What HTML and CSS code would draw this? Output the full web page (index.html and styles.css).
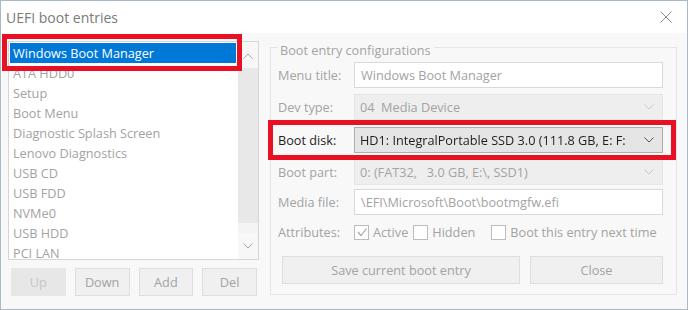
FILE: index.html
```html
<!DOCTYPE html>
<html lang="en">
<head>
  <meta charset="UTF-8" />
  <title>UEFI boot entries</title>
  <link rel="stylesheet" href="styles.css">
</head>
<body>
  <div class="window">
    <div class="titlebar">
      <span class="title">UEFI boot entries</span>
      <svg class="close-x" width="12" height="12" viewBox="0 0 12 12">
        <path d="M0.5 0.5 L11.5 11.5 M11.5 0.5 L0.5 11.5" stroke="#8c8c8c" stroke-width="1" fill="none"/>
      </svg>
    </div>

    <div class="client">
      <div class="left">
        <div class="listbox">
          <div class="list-clip">
            <ul class="items">
              <li class="selected">Windows Boot Manager</li>
              <li>ATA HDD0</li>
              <li>Setup</li>
              <li>Boot Menu</li>
              <li>Diagnostic Splash Screen</li>
              <li>Lenovo Diagnostics</li>
              <li>USB CD</li>
              <li>USB FDD</li>
              <li>NVMe0</li>
              <li>USB HDD</li>
              <li>PCI LAN</li>
            </ul>
            <div class="scrollbar">
              <div class="sb-arrow">
                <svg width="10" height="6" viewBox="0 0 10 6"><path d="M0.5 5.5 L5 1 L9.5 5.5" stroke="#a6a6a6" fill="none"/></svg>
              </div>
              <div class="sb-thumb"></div>
              <div class="sb-track"></div>
              <div class="sb-arrow">
                <svg width="10" height="6" viewBox="0 0 10 6"><path d="M0.5 0.5 L5 5 L9.5 0.5" stroke="#a6a6a6" fill="none"/></svg>
              </div>
            </div>
          </div>
          <div class="mark mark-list"></div>
        </div>
        <div class="list-buttons">
          <button class="btn btn-off">Up</button>
          <button class="btn">Down</button>
          <button class="btn">Add</button>
          <button class="btn">Del</button>
        </div>
      </div>

      <fieldset class="group">
        <legend>Boot entry configurations</legend>

        <div class="row row-title">
          <span class="label">Menu title:</span>
          <div class="field field-input">Windows Boot Manager</div>
        </div>

        <div class="row row-dev">
          <span class="label">Dev type:</span>
          <div class="field field-select">
            <span class="value">04&nbsp; Media Device</span>
            <svg class="chev" width="10" height="6" viewBox="0 0 10 6"><path d="M0.5 0.5 L5 5 L9.5 0.5" stroke="#c8c8c8" fill="none"/></svg>
          </div>
        </div>

        <div class="row row-disk">
          <span class="label label-on">Boot disk:</span>
          <div class="field field-select field-on">
            <span class="value">HD1: IntegralPortable SSD 3.0 (111.8 GB, E: F:</span>
            <svg class="chev" width="10" height="6" viewBox="0 0 10 6"><path d="M0.5 0.5 L5 5 L9.5 0.5" stroke="#555" fill="none"/></svg>
          </div>
          <div class="mark mark-disk"></div>
        </div>

        <div class="row row-part">
          <span class="label">Boot part:</span>
          <div class="field field-select">
            <span class="value">0: (FAT32,&nbsp;&nbsp; 3.0 GB, E:\, SSD1)</span>
            <svg class="chev" width="10" height="6" viewBox="0 0 10 6"><path d="M0.5 0.5 L5 5 L9.5 0.5" stroke="#c8c8c8" fill="none"/></svg>
          </div>
        </div>

        <div class="row row-media">
          <span class="label">Media file:</span>
          <div class="field field-input">\EFI\Microsoft\Boot\bootmgfw.efi</div>
        </div>

        <div class="row row-attrs">
          <span class="label">Attributes:</span>
          <div class="checks">
            <label class="check">
              <span class="box">
                <svg width="12" height="12" viewBox="0 0 12 12"><path d="M2 6 L5 9.5 L10.5 2.5" stroke="#a8a8a8" stroke-width="1.2" fill="none"/></svg>
              </span>Active
            </label>
            <label class="check"><span class="box"></span>Hidden</label>
            <label class="check check-far"><span class="box"></span>Boot this entry next time</label>
          </div>
        </div>

        <div class="actions">
          <button class="btn btn-save">Save current boot entry</button>
          <button class="btn btn-close">Close</button>
        </div>
      </fieldset>
    </div>
  </div>
</body>
</html>
```

FILE: styles.css
```css
:root {
  --client-bg: #f8f8f8;
  --dim-text: #a3a3a3;
  --dark-text: #1e1e1e;
  --mark: #e81123;
  --select-blue: #0078d7;
}

* {
  box-sizing: border-box;
}

body {
  margin: 0;
  font-family: 'Open Sans', 'Noto Sans', sans-serif;
  font-size: 12.7px;
  color: var(--dim-text);
}

.window {
  width: 688px;
  height: 310px;
  border: 1px solid #a9b9c6;
  background-color: var(--client-bg);
  display: flex;
  flex-direction: column;
}

.titlebar {
  height: 32px;
  background-color: #ffffff;
  display: flex;
  align-items: center;
  justify-content: space-between;
  padding: 0 15px 0 5px;
}

.title {
  font-size: 14px;
  color: #7a7a7a;
}

.client {
  flex: 1;
  display: flex;
  gap: 11px;
  padding: 8px 10px 0 7px;
}

/* left side: entry list */
.left {
  flex: none;
  width: 251px;
  display: flex;
  flex-direction: column;
}

.listbox {
  position: relative;
  height: 219px;
  border: 1px solid #d6d6d6;
  background-color: #ffffff;
}

.list-clip {
  height: 100%;
  display: flex;
  overflow: hidden;
}

.items {
  list-style: none;
  margin: 0;
  padding: 1px 0 0 1px;
  flex: 1;
}

.items li {
  height: 20px;
  line-height: 20px;
  padding-left: 3px;
  white-space: nowrap;
}

.items li.selected {
  background-color: var(--select-blue);
  color: #ffffff;
  margin-right: 2px;
}

.scrollbar {
  width: 20px;
  display: flex;
  flex-direction: column;
  background-color: #f4f4f4;
}

.sb-arrow {
  height: 26px;
  display: flex;
  align-items: center;
  justify-content: center;
  background-color: #f7f7f7;
}

.sb-arrow:first-child {
  padding-top: 2px;
}

.sb-thumb {
  height: 155px;
  background-color: #e8e8e8;
}

.sb-track {
  flex: 1;
}

.list-buttons {
  display: grid;
  grid-template-columns: repeat(4, 1fr);
  gap: 9px;
  margin: 8px 2px 0 3px;
}

.btn {
  height: 28px;
  font-family: inherit;
  font-size: 12.7px;
  color: var(--dim-text);
  background-color: #f0f0f0;
  border: 1px solid #dedede;
  padding: 0;
}

.btn-off {
  background-color: #e7e7e7;
  border-color: #e7e7e7;
  color: #c6c6c6;
}

/* right side: configuration group */
.group {
  flex: 1;
  min-width: 0;
  margin: 0 0 14px 0;
  padding: 0 13px 0 7px;
  border: 1px solid #e6e6e6;
  display: flex;
  flex-direction: column;
}

.group legend {
  padding: 0 3px 0 2px;
  line-height: 12px;
  height: 12px;
  position: relative;
  top: 3px;
}

.row {
  display: flex;
  align-items: center;
  height: 26px;
}

.row-title {
  margin-top: 9px;
}

.row-dev {
  margin-top: 6px;
}

.row-disk {
  position: relative;
  margin-top: 7px;
}

.row-part {
  margin-top: 6px;
}

.row-media {
  margin-top: 4px;
}

.row-attrs {
  height: 20px;
  margin-top: 7px;
}

.label {
  width: 76px;
  flex: none;
}

.label-on {
  color: var(--dark-text);
}

.field {
  flex: 1;
  min-width: 0;
  height: 26px;
  display: flex;
  align-items: center;
  padding-left: 6px;
  white-space: nowrap;
  overflow: hidden;
}

.field-input {
  background-color: #ffffff;
  border: 1px solid #d9d9d9;
}

.field-select {
  background-color: #eeeeee;
  border: 1px solid #e6e6e6;
  justify-content: space-between;
  padding-right: 8px;
  padding-left: 5px;
}

.field-on {
  background-color: #e5e5e5;
  border-color: #adadad;
  color: var(--dark-text);
}

.value {
  overflow: hidden;
  flex: 1;
  min-width: 0;
  margin-right: 5px;
}

.field-on .value {
  -webkit-mask-image: linear-gradient(to right, #000 96%, transparent);
  mask-image: linear-gradient(to right, #000 96%, transparent);
}

.chev {
  flex: none;
}

.checks {
  display: flex;
  align-items: center;
}

.check {
  display: flex;
  align-items: center;
  gap: 4px;
  margin-right: 5px;
}

.check-far {
  margin-left: 11px;
}

.box {
  width: 15px;
  height: 15px;
  border: 1px solid #bcbcbc;
  background-color: #ffffff;
  display: flex;
  align-items: center;
  justify-content: center;
}

.actions {
  display: flex;
  gap: 10px;
  margin: 14px 0 0 4px;
}

.btn-save {
  width: 238px;
}

.btn-close {
  width: 133px;
}

/* red annotation frames */
.mark {
  position: absolute;
  border: 5px solid var(--mark);
}

.mark-list {
  left: -7px;
  top: -8px;
  width: 240px;
  height: 37px;
}

.mark-disk {
  left: -10px;
  top: -7px;
  width: 408px;
  height: 40px;
}
```
